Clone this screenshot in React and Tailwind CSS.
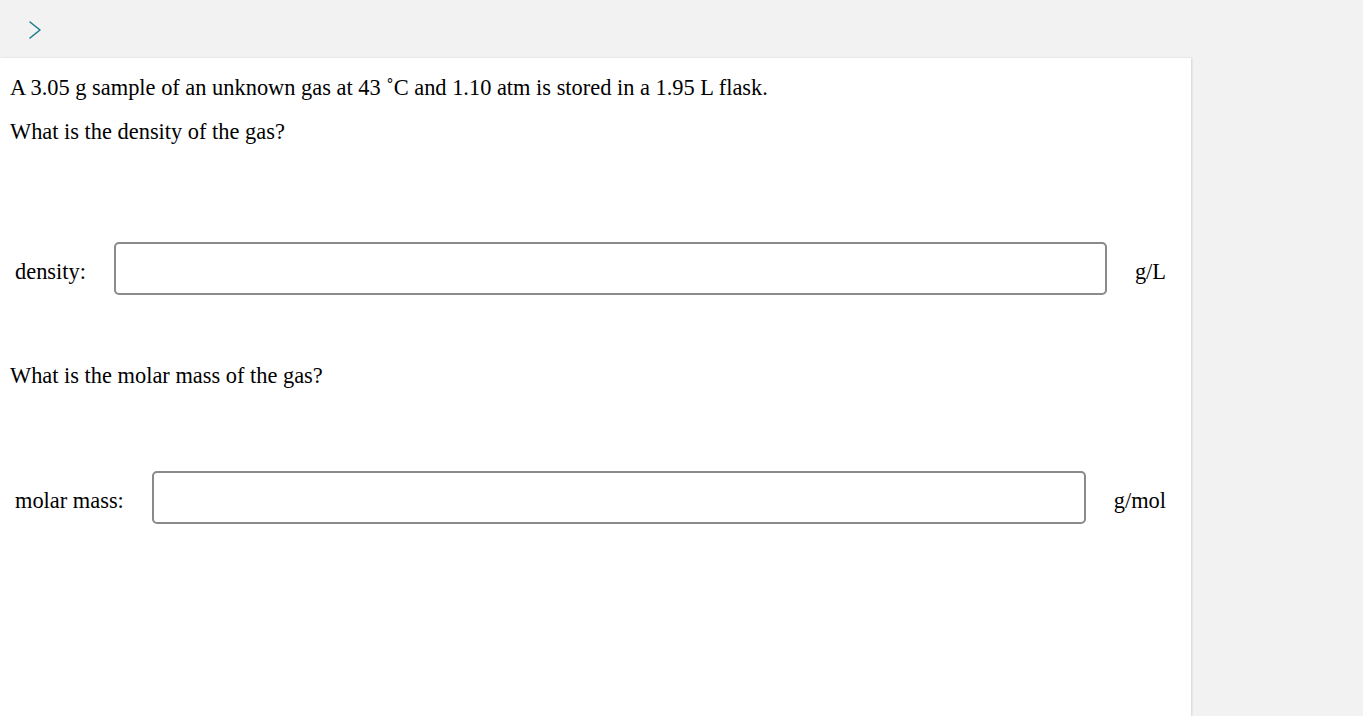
export default function App() {
  return (
    <div className="min-h-[716px] bg-[#f2f2f2] font-['Liberation_Serif',serif] text-black">
      <div className="h-[58px] flex items-center pl-[27px]">
        <svg width="16" height="20" viewBox="0 0 16 20" className="mt-[1px]">
          <polyline points="3,2 13,10 3,18" fill="none" stroke="#1b7a8e" strokeWidth="1.6" strokeLinecap="round" strokeLinejoin="round" />
        </svg>
      </div>
      <div className="w-[1191px] min-h-[658px] bg-white shadow-[1px_0_2px_rgba(0,0,0,0.12)] pt-[17px]">
        <p className="pl-[10px] text-[22.4px] leading-[26px]">
          A 3.05 g sample of an unknown gas at 43 ˚C and 1.10 atm is stored in a 1.95 L flask.
        </p>
        <p className="pl-[10px] mt-[18px] text-[22.4px] leading-[26px]">What is the density of the gas?</p>

        <div className="flex items-center gap-[28px] pl-[15px] pr-[25px] mt-[97px]">
          <span className="text-[22.4px] pt-[6px]">density:</span>
          <input className="flex-1 h-[53px] border-2 border-[#8a8a8a] rounded-[5px] bg-white px-2 text-[20px]" />
          <span className="text-[22.4px] pt-[6px]">g/L</span>
        </div>

        <p className="pl-[10px] mt-[68px] text-[22.4px] leading-[26px]">What is the molar mass of the gas?</p>

        <div className="flex items-center gap-[28px] pl-[15px] pr-[25px] mt-[82px]">
          <span className="text-[22.4px] pt-[6px]">molar mass:</span>
          <input className="flex-1 h-[53px] border-2 border-[#8a8a8a] rounded-[5px] bg-white px-2 text-[20px]" />
          <span className="text-[22.4px] pt-[6px]">g/mol</span>
        </div>
      </div>
    </div>
  );
}
